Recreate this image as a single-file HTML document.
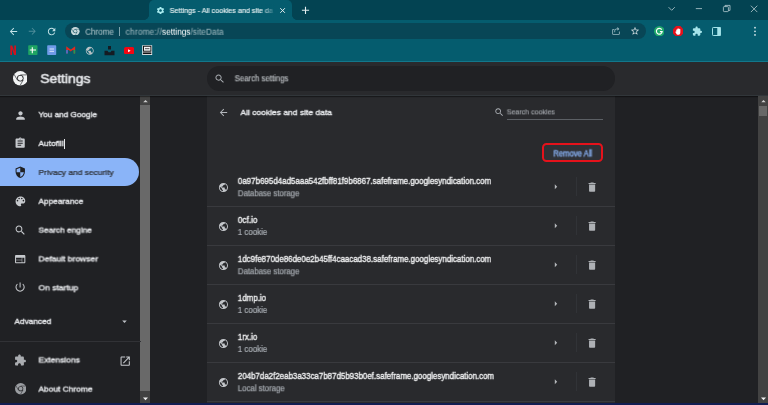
<!DOCTYPE html>
<html><head><meta charset="utf-8"><title>Settings - All cookies and site data</title>
<style>
*{box-sizing:border-box;margin:0;padding:0}
html,body{width:768px;height:405px;overflow:hidden;background:#202124;font-family:"Liberation Sans",sans-serif;}
body{position:relative}
.abs{position:absolute}
.t{position:absolute;left:0;top:0;white-space:pre;line-height:1;transform-origin:0 0;will-change:opacity}
#tabstrip{left:0;top:0;width:768px;height:20px;background:#034352}
#tab{left:148.5px;top:0;width:143.5px;height:21px;background:#055c6e;border-radius:5px 5px 0 0}
#tabl{left:143.5px;top:15px;width:5px;height:5px;background:radial-gradient(circle at 0 0,#034352 4.6px,#055c6e 5.2px)}
#tabr{left:292px;top:15px;width:5px;height:5px;background:radial-gradient(circle at 100% 0,#034352 4.6px,#055c6e 5.2px)}
#toolbar{left:0;top:20px;width:768px;height:41px;background:#055c6e}
#omni{left:65px;top:23px;width:581px;height:16.4px;border-radius:8.2px;background:#084656}
#sep{left:0;top:61px;width:768px;height:1px;background:#12778b}
#hdr{left:0;top:62px;width:768px;height:34px;background:#292a2d;box-shadow:0 1px 1px rgba(0,0,0,.4);border-bottom:1px solid #31363a}
#search{left:207px;top:66.2px;width:408px;height:24.4px;border-radius:12.2px;background:#202124}
#side{left:0;top:95.8px;width:141px;height:310px;background:#202124}
#sel{left:0;top:157.8px;width:138.8px;height:28.6px;background:#8ab4f8;border-radius:0 14.5px 14.5px 0}
#sbar{left:140.3px;top:95.8px;width:9.4px;height:307.2px;background:#424242}
#thumb{left:140.3px;top:105.1px;width:9.400px;height:286.1px;background:#696969}
#card{left:207px;top:95.8px;width:408px;height:308px;background:#292a2d}
.row{position:absolute;left:207px;width:408px;height:1px;background:#393a3e}
.vsep{position:absolute;left:576px;width:1px;height:19px;background:#313337}
#sideline{left:0;top:340.9px;width:140.7px;height:1px;background:#313236}
#under{left:506.9px;top:119.2px;width:96px;height:1px;background:#5c6065}
#rabox{left:542.2px;top:143.4px;width:61.2px;height:18.7px;border:2px solid #e5121b;border-radius:4.5px;background:#2f3136}
#caret{left:64.2px;top:138.6px;width:0.9px;height:10px;background:#e8eaed}
#bottom{left:0;top:403.1px;width:768px;height:2px;background:#121e52}
#fade{left:261px;top:4px;width:16px;height:13px;background:linear-gradient(90deg,rgba(5,92,110,0),rgba(5,92,110,.25) 30%,#055c6e 90%)}
</style></head><body>
<div class="abs" id="tabstrip"></div>
<div class="abs" id="tab"></div><div class="abs" id="tabl"></div><div class="abs" id="tabr"></div>
<div class="abs" id="toolbar"></div>
<div class="abs" id="omni"></div>
<div class="abs" id="sep"></div>
<div class="abs" id="side"></div>
<div class="abs" id="sel"></div>
<div class="abs" id="sbar"></div>
<div class="abs" id="thumb"></div>
<div class="abs" id="card"></div>
<div class="abs" id="hdr"></div>
<div class="abs" id="search"></div>
<div class="abs" id="sideline"></div>
<div class="abs" id="under"></div>
<div class="abs" id="rabox"></div>
<div class="abs" id="caret"></div>
<div class="abs" style="left:119.2px;top:26.5px;width:0.8px;height:9.5px;background:#7fa5ae"></div>
<!-- window controls -->
<svg class="abs" style="left:660px;top:0" width="108" height="20" viewBox="0 0 108 20" fill="none" stroke="#b9cdd2" stroke-width="0.8">
<path d="M8.6 7.2L11.7 10.3L14.8 7.2"/>
<path d="M35.8 8.6H42"/>
<rect x="63.4" y="6.6" width="5" height="5" rx="0.8"/><path d="M65 6.6V5.4H70V10.4H68.4"/>
<path d="M90.9 5.7L97.3 12.1M97.3 5.7L90.9 12.1"/>
</svg>
<!-- tab close + new tab -->
<svg class="abs" style="left:276px;top:4px" width="40" height="14" viewBox="0 0 40 14" fill="none" stroke="#e4eef0" stroke-width="1">
<path d="M4.3 4.2L8.9 8.8M8.9 4.2L4.3 8.8"/>
<path d="M25.9 6.3H33.1M29.5 2.8V9.9" stroke-width="1.1"/>
</svg>
<!-- right scrollbar -->
<div class="abs" style="left:758px;top:95.8px;width:10px;height:307.3px;background:#424242"></div>
<div class="abs" style="left:759px;top:105.5px;width:7.900px;height:10.200px;background:#686868"></div>
<svg class="abs" style="left:758.500px;top:96px" width="9" height="10" viewBox="0 0 9 10"><path d="M2.300 6.200L4.500 3.900L6.700 6.200z" fill="#d0d0d0"/></svg>
<svg class="abs" style="left:758.600px;top:392.700px" width="9" height="11" viewBox="0 0 9 11"><path d="M2 4.500L4.500 7.300L7 4.500z" fill="#f1f1f1"/></svg>
<!-- scrollbar arrows -->
<svg class="abs" style="left:140.5px;top:95.8px" width="9" height="10" viewBox="0 0 9 10"><path d="M2.200 6.300L4.500 3.900L6.800 6.300z" fill="#d0d0d0"/></svg>
<svg class="abs" style="left:140.500px;top:392.9px" width="9" height="11" viewBox="0 0 9 11"><path d="M2 4.500L4.500 7.300L7 4.500z" fill="#f1f1f1"/></svg>
<!-- extension icons -->
<svg class="abs" style="left:653.6px;top:25.9px" width="10.6" height="10.6" viewBox="0 0 24 24"><circle cx="12" cy="12" r="12" fill="#1fa86b"/><path d="M17.500 8.200A6.600 6.600 0 1 0 18.600 12.600H13.400" fill="none" stroke="#fff" stroke-width="2.600"/></svg>
<svg class="abs" style="left:672.8px;top:25.900px" width="10.4" height="10.600" viewBox="0 0 24 24"><path d="M7 0H17L24 7V17L17 24H7L0 17V7z" fill="#e3121c"/><path d="M7.500 13V8.500a1.300 1.300 0 0 1 2.300 0V6.500a1.300 1.300 0 0 1 2.400 0V6a1.300 1.300 0 0 1 2.400 0V7.500a1.200 1.200 0 0 1 2.300 0V14c0 4-2 6-5 6s-4-2-6.500-6.500c1-1 1.600-.8 2.100-.5z" fill="#fff"/></svg>
<svg class="abs" style="left:711.8px;top:26.8px" width="9.200" height="9" viewBox="0 0 18.400 18" ><rect x="1" y="1" width="16.400" height="16" rx="1.500" fill="none" stroke="#a5e4ea" stroke-width="2"/><rect x="10.500" y="1" width="7" height="16" fill="#a5e4ea"/></svg>
<svg class="abs" style="left:753px;top:26px" width="4" height="11" viewBox="0 0 4 11" fill="#d6e6ea"><circle cx="2" cy="1.700" r="0.900"/><circle cx="2" cy="5.300" r="0.900"/><circle cx="2" cy="8.900" r="0.900"/></svg>
<!-- bookmarks -->
<svg class="abs" style="left:8px;top:44px" width="150" height="13" viewBox="0 0 150 13">
<path d="M2.300 1.500H4.200L6.300 7.500V1.500H8V11H6.200L4 5V11H2.300z" fill="#d3121d"/>
<rect x="20.200" y="1.300" width="9.300" height="9.700" rx="0.800" fill="#1fa463"/><path d="M24.300 3.300V9.300M21.800 6H28M25 6" stroke="#fff" stroke-width="1.100" fill="none"/>
<rect x="39.200" y="1.300" width="9" height="9.700" rx="0.800" fill="#6f9be8"/><path d="M41.500 5H46M41.500 7.300H46" stroke="#e9f0fc" stroke-width="0.900"/>
<path d="M59 9.500V3.800L62.700 6.600L66.400 3.800V9.500" fill="none" stroke="#e02a20" stroke-width="1.500"/><path d="M59 9.500V6" stroke="#3b78e7" stroke-width="1.500"/><path d="M66.400 9.500V6" stroke="#1e9e52" stroke-width="1.500"/>
</svg>
<svg class="abs" style="left:7.50px;top:25.60px;" width="11" height="11" viewBox="0 0 24 24"><path fill="#c5e3e8" d="M20 11H7.83l5.59-5.59L12 4l-8 8 8 8 1.41-1.41L7.83 13H20v-2z"/></svg>
<svg class="abs" style="left:26.75px;top:25.95px;" width="10.5" height="10.5" viewBox="0 0 24 24"><path fill="#4f8d9a" d="M12 4l-1.41 1.41L16.17 11H4v2h12.17l-5.58 5.59L12 20l8-8z"/></svg>
<svg class="abs" style="left:45.70px;top:25.60px;" width="11.2" height="11.2" viewBox="0 0 24 24"><path fill="#c5e3e8" d="M17.65 6.35C16.2 4.9 14.21 4 12 4c-4.42 0-7.99 3.58-7.99 8s3.57 8 7.99 8c3.73 0 6.84-2.55 7.73-6h-2.08c-.82 2.33-3.04 4-5.65 4-3.31 0-6-2.69-6-6s2.69-6 6-6c1.66 0 3.14.69 4.22 1.78L13 11h7V4l-2.35 2.35z"/></svg>
<svg class="abs" style="left:71.20px;top:26.90px" width="8.6" height="8.6" viewBox="-12 -12 24 24"><circle r="12" fill="#c9d9dc"/><circle r="5.4" fill="#084a5a"/><circle r="4.0" fill="#c9d9dc"/><path d="M0 -5.6H10.6 M4.85 2.8L-0.45 11.98 M-4.85 2.8L-10.15 -6.38" stroke="#084a5a" stroke-width="1.1" fill="none"/></svg>
<svg class="abs" style="left:155.80px;top:6.10px;" width="9" height="9" viewBox="0 0 24 24"><path fill="#a9ecf0" d="M19.14 12.94c.04-.3.06-.61.06-.94 0-.32-.02-.64-.07-.94l2.030-1.580c.18-.14.23-.41.12-.61l-1.920-3.320c-.12-.22-.37-.29-.59-.22l-2.390.96c-.5-.38-1.030-.7-1.620-.94l-.36-2.540c-.04-.24-.24-.41-.48-.41h-3.840c-.24 0-.43.17-.47.41l-.36 2.540c-.59.24-1.130.57-1.620.94l-2.390-.96c-.22-.08-.47 0-.59.22L2.740 8.870c-.12.21-.08.47.12.61l2.030 1.580c-.05.3-.09.63-.09.94s.02.64.07.94l-2.030 1.580c-.18.14-.23.41-.12.61l1.920 3.320c.12.22.37.29.59.22l2.390-.96c.5.38 1.030.7 1.620.94l.36 2.540c.05.24.24.41.48.41h3.840c.24 0 .44-.17.470-.41l.36-2.540c.59-.24 1.130-.56 1.620-.94l2.390.96c.22.08.47 0 .59-.22l1.920-3.320c.12-.22.070-.47-.12-.61l-2.010-1.580zM12 15.600c-1.980 0-3.600-1.620-3.600-3.600s1.620-3.600 3.600-3.600 3.600 1.620 3.600 3.600-1.620 3.600-3.600 3.600z"/></svg>
<svg class="abs" style="left:610.70px;top:26.30px;" width="10" height="10" viewBox="0 0 24 24"><path fill="#9dbcc3" d="M19 19H5V9h3V7H5c-1.100 0-2 .9-2 2v10c0 1.100.9 2 2 2h14c1.100 0 2-.9 2-2v-6h-2v6zM16 3l-1.410 1.410L16.170 6H14c-3.310 0-6 2.690-6 6v3h2v-3c0-2.210 1.790-4 4-4h2.170l-1.580 1.590L16 11l4-4-4-4z"/></svg>
<svg class="abs" style="left:630.00px;top:26.00px;" width="10" height="10" viewBox="0 0 24 24"><path fill="#d5dfe2" d="M22 9.240l-7.190-.62L12 2 9.190 8.630 2 9.240l5.460 4.730L5.820 21 12 17.270 18.180 21l-1.630-7.030L22 9.240zM12 15.400l-3.760 2.270 1-4.280-3.320-2.880 4.380-.38L12 6.100l1.710 4.040 4.380.38-3.320 2.880 1 4.280L12 15.400z"/></svg>
<svg class="abs" style="left:691.95px;top:26.05px;" width="10.5" height="10.5" viewBox="0 0 24 24"><path fill="#a5e4ea" d="M20.5 11H19V7c0-1.1-.9-2-2-2h-4V3.500C13 2.120 11.880 1 10.500 1S8 2.120 8 3.500V5H4c-1.100 0-1.990.9-1.990 2v3.800H3.500c1.490 0 2.700 1.210 2.700 2.700s-1.210 2.700-2.700 2.700H2V20c0 1.100.9 2 2 2h3.800v-1.500c0-1.490 1.210-2.700 2.700-2.700 1.490 0 2.700 1.210 2.700 2.700V22H17c1.100 0 2-.9 2-2v-4h1.500c1.380 0 2.500-1.120 2.500-2.500S21.880 11 20.500 11z"/></svg>
<svg class="abs" style="left:12.70px;top:71.30px" width="14.6" height="14.6" viewBox="-12 -12 24 24"><circle r="12" fill="#f1f3f4"/><circle r="5.4" fill="#292a2d"/><circle r="4.0" fill="#f1f3f4"/><path d="M0 -5.6H10.6 M4.85 2.8L-0.45 11.98 M-4.85 2.8L-10.15 -6.38" stroke="#292a2d" stroke-width="1.1" fill="none"/></svg>
<svg class="abs" style="left:214.05px;top:72.75px;" width="11.5" height="11.5" viewBox="0 0 24 24"><path fill="#a6aaaf" d="M15.5 14h-.79l-.28-.27C15.41 12.59 16 11.11 16 9.5 16 5.91 13.09 3 9.5 3S3 5.91 3 9.5 5.91 16 9.5 16c1.61 0 3.09-.59 4.23-1.570l.27.28v.79l5 4.990L20.490 19l-4.990-5zm-6 0C7.010 14 5 11.990 5 9.500S7.010 5 9.500 5 14 7.010 14 9.500 11.990 14 9.500 14z"/></svg>
<svg class="abs" style="left:13.80px;top:108.50px;" width="13" height="13" viewBox="0 0 24 24"><path fill="#c6c9cd" d="M12 12c2.21 0 4-1.79 4-4s-1.79-4-4-4-4 1.79-4 4 1.79 4 4 4zm0 2c-2.67 0-8 1.34-8 4v2h16v-2c0-2.66-5.33-4-8-4z"/></svg>
<svg class="abs" style="left:14.45px;top:137.05px;" width="12.3" height="12.3" viewBox="0 0 24 24"><path fill="#c6c9cd" d="M19 3h-4.18C14.4 1.84 13.3 1 12 1c-1.3 0-2.4.84-2.82 2H5c-1.1 0-2 .9-2 2v14c0 1.1.9 2 2 2h14c1.1 0 2-.9 2-2V5c0-1.1-.9-2-2-2zm-7 0c.55 0 1 .45 1 1s-.45 1-1 1-1-.45-1-1 .45-1 1-1zm2 14H7v-2h7v2zm3-4H7v-2h10v2zm0-4H7V7h10v2z"/></svg>
<svg class="abs" style="left:14.35px;top:166.05px;" width="12.5" height="12.5" viewBox="0 0 24 24"><path fill="#202124" d="M12 1L3 5v6c0 5.55 3.84 10.74 9 12 5.16-1.26 9-6.45 9-12V5l-9-4zm0 10.99h7c-.53 4.12-3.28 7.79-7 8.94V12H5V6.3l7-3.11v8.8z"/></svg>
<svg class="abs" style="left:14.00px;top:194.55px;" width="12.9" height="12.9" viewBox="0 0 24 24"><path fill="#c6c9cd" d="M12 3c-4.97 0-9 4.03-9 9s4.03 9 9 9c.83 0 1.5-.67 1.5-1.5 0-.39-.15-.74-.39-1.01-.23-.26-.38-.61-.38-.99 0-.83.67-1.5 1.5-1.5H16c2.76 0 5-2.24 5-5 0-4.42-4.03-8-9-8zm-5.5 9c-.83 0-1.5-.67-1.5-1.5S5.67 9 6.5 9 8 9.67 8 10.5 7.33 12 6.5 12zm3-4C8.67 8 8 7.33 8 6.5S8.67 5 9.5 5s1.5.67 1.5 1.500S10.33 8 9.5 8zm5 0c-.83 0-1.5-.67-1.5-1.500S13.670 5 14.5 5s1.5.67 1.5 1.500S15.33 8 14.5 8zm3 4c-.83 0-1.5-.67-1.5-1.500S16.670 9 17.5 9s1.5.67 1.5 1.500-.67 1.500-1.500 1.500z"/></svg>
<svg class="abs" style="left:14.40px;top:223.80px;" width="12.6" height="12.6" viewBox="0 0 24 24"><path fill="#c6c9cd" d="M15.5 14h-.79l-.28-.27C15.41 12.59 16 11.11 16 9.5 16 5.91 13.09 3 9.5 3S3 5.91 3 9.5 5.91 16 9.5 16c1.61 0 3.09-.59 4.23-1.570l.27.28v.79l5 4.990L20.490 19l-4.990-5zm-6 0C7.010 14 5 11.990 5 9.500S7.010 5 9.500 5 14 7.010 14 9.500 11.990 14 9.500 14z"/></svg>
<svg class="abs" style="left:14.20px;top:252.85px;" width="12.4" height="12.4" viewBox="0 0 24 24"><path fill="#c6c9cd" d="M20 4H4c-1.1 0-1.99.9-1.99 2L2 18c0 1.1.9 2 2 2h16c1.1 0 2-.9 2-2V6c0-1.1-.9-2-2-2zm-5 14H4v-4h11v4zm0-5H4V9h11v4zm5 5h-4V9h4v9z"/></svg>
<svg class="abs" style="left:14.35px;top:281.35px;" width="12.2" height="12.2" viewBox="0 0 24 24"><path fill="#c6c9cd" d="M13 3h-2v10h2V3zm4.83 2.170l-1.420 1.420C17.990 7.860 19 9.810 19 12c0 3.870-3.130 7-7 7s-7-3.130-7-7c0-2.190 1.010-4.140 2.580-5.420L6.170 5.170C4.230 6.820 3 9.260 3 12c0 4.970 4.030 9 9 9s9-4.030 9-9c0-2.740-1.230-5.180-3.170-6.830z"/></svg>
<svg class="abs" style="left:119.00px;top:315.80px;" width="11" height="11" viewBox="0 0 24 24"><path fill="#bdc1c6" d="M7 10l5 5 5-5z"/></svg>
<svg class="abs" style="left:14.25px;top:354.15px;" width="12.5" height="12.5" viewBox="0 0 24 24"><path fill="#aaadb1" d="M20.5 11H19V7c0-1.1-.9-2-2-2h-4V3.500C13 2.120 11.880 1 10.500 1S8 2.120 8 3.500V5H4c-1.100 0-1.990.9-1.990 2v3.800H3.500c1.490 0 2.700 1.210 2.700 2.700s-1.210 2.700-2.700 2.700H2V20c0 1.100.9 2 2 2h3.800v-1.500c0-1.490 1.210-2.700 2.700-2.700 1.490 0 2.700 1.210 2.700 2.700V22H17c1.100 0 2-.9 2-2v-4h1.500c1.380 0 2.500-1.120 2.500-2.500S21.880 11 20.500 11z"/></svg>
<svg class="abs" style="left:118.50px;top:354.50px;" width="12.4" height="12.4" viewBox="0 0 24 24"><path fill="#c6c9cd" d="M19 19H5V5h7V3H5c-1.110 0-2 .9-2 2v14c0 1.100.89 2 2 2h14c1.100 0 2-.9 2-2v-7h-2v7zM14 3v2h3.590l-9.830 9.830 1.410 1.410L19 6.410V10h2V3h-7z"/></svg>
<svg class="abs" style="left:15.00px;top:383.30px" width="11.4" height="11.4" viewBox="-12 -12 24 24"><circle r="12" fill="#9b9ea2"/><circle r="5.4" fill="#202124"/><circle r="4.0" fill="#9b9ea2"/><path d="M0 -5.6H10.6 M4.85 2.8L-0.45 11.98 M-4.85 2.8L-10.15 -6.38" stroke="#202124" stroke-width="1.1" fill="none"/></svg>
<svg class="abs" style="left:218.10px;top:107.20px;" width="11" height="11" viewBox="0 0 24 24"><path fill="#b4b7bc" d="M20 11H7.83l5.59-5.59L12 4l-8 8 8 8 1.41-1.41L7.83 13H20v-2z"/></svg>
<svg class="abs" style="left:494.35px;top:107.25px;" width="10.5" height="10.5" viewBox="0 0 24 24"><path fill="#aeb2b7" d="M15.5 14h-.79l-.28-.27C15.41 12.59 16 11.11 16 9.5 16 5.91 13.09 3 9.5 3S3 5.91 3 9.5 5.91 16 9.5 16c1.61 0 3.09-.59 4.23-1.570l.27.28v.79l5 4.990L20.490 19l-4.990-5zm-6 0C7.010 14 5 11.990 5 9.500S7.010 5 9.500 5 14 7.010 14 9.500 11.990 14 9.500 14z"/></svg>
<svg class="abs" style="left:218.10px;top:181.55px;" width="10.9" height="10.9" viewBox="0 0 24 24"><path fill="#c3c6ca" d="M12 2C6.48 2 2 6.48 2 12s4.48 10 10 10 10-4.48 10-10S17.520 2 12 2zm-1 17.930c-3.950-.49-7-3.850-7-7.930 0-.62.080-1.210.210-1.790L9 15v1c0 1.100.9 2 2 2v1.930zm6.900-2.540c-.26-.81-1-1.390-1.900-1.390h-1v-3c0-.55-.45-1-1-1H8v-2h2c.55 0 1-.45 1-1V7h2c1.100 0 2-.9 2-2v-.41c2.930 1.190 5 4.060 5 7.410 0 2.080-.8 3.970-2.100 5.390z"/></svg>
<svg class="abs" style="left:549.65px;top:181.05px;" width="11.5" height="11.5" viewBox="0 0 24 24"><path fill="#b5b8bc" d="M10 17l5-5-5-5v10z"/></svg>
<svg class="abs" style="left:586.00px;top:180.60px;" width="12.2" height="12.2" viewBox="0 0 24 24"><path fill="#aeb1b5" d="M6 19c0 1.100.9 2 2 2h8c1.100 0 2-.9 2-2V7H6v12zM19 4h-3.500l-1-1h-5l-1 1H5v2h14V4z"/></svg>
<div class="vsep" style="top:177.3px"></div>
<div class="row" style="top:205.9px"></div>
<svg class="abs" style="left:218.10px;top:220.55px;" width="10.9" height="10.9" viewBox="0 0 24 24"><path fill="#c3c6ca" d="M12 2C6.48 2 2 6.48 2 12s4.48 10 10 10 10-4.48 10-10S17.520 2 12 2zm-1 17.930c-3.950-.49-7-3.850-7-7.930 0-.62.080-1.210.210-1.790L9 15v1c0 1.100.9 2 2 2v1.930zm6.900-2.540c-.26-.81-1-1.390-1.900-1.390h-1v-3c0-.55-.45-1-1-1H8v-2h2c.55 0 1-.45 1-1V7h2c1.100 0 2-.9 2-2v-.41c2.930 1.190 5 4.060 5 7.410 0 2.080-.8 3.970-2.100 5.390z"/></svg>
<svg class="abs" style="left:549.65px;top:220.05px;" width="11.5" height="11.5" viewBox="0 0 24 24"><path fill="#b5b8bc" d="M10 17l5-5-5-5v10z"/></svg>
<svg class="abs" style="left:586.00px;top:219.60px;" width="12.2" height="12.2" viewBox="0 0 24 24"><path fill="#aeb1b5" d="M6 19c0 1.100.9 2 2 2h8c1.100 0 2-.9 2-2V7H6v12zM19 4h-3.500l-1-1h-5l-1 1H5v2h14V4z"/></svg>
<div class="vsep" style="top:216.3px"></div>
<div class="row" style="top:244.9px"></div>
<svg class="abs" style="left:218.10px;top:259.55px;" width="10.9" height="10.9" viewBox="0 0 24 24"><path fill="#c3c6ca" d="M12 2C6.48 2 2 6.48 2 12s4.48 10 10 10 10-4.48 10-10S17.520 2 12 2zm-1 17.930c-3.950-.49-7-3.850-7-7.930 0-.62.080-1.210.210-1.790L9 15v1c0 1.100.9 2 2 2v1.930zm6.900-2.540c-.26-.81-1-1.390-1.900-1.390h-1v-3c0-.55-.45-1-1-1H8v-2h2c.55 0 1-.45 1-1V7h2c1.100 0 2-.9 2-2v-.41c2.930 1.190 5 4.060 5 7.410 0 2.080-.8 3.970-2.100 5.390z"/></svg>
<svg class="abs" style="left:549.65px;top:259.05px;" width="11.5" height="11.5" viewBox="0 0 24 24"><path fill="#b5b8bc" d="M10 17l5-5-5-5v10z"/></svg>
<svg class="abs" style="left:586.00px;top:258.60px;" width="12.2" height="12.2" viewBox="0 0 24 24"><path fill="#aeb1b5" d="M6 19c0 1.100.9 2 2 2h8c1.100 0 2-.9 2-2V7H6v12zM19 4h-3.500l-1-1h-5l-1 1H5v2h14V4z"/></svg>
<div class="vsep" style="top:255.3px"></div>
<div class="row" style="top:283.9px"></div>
<svg class="abs" style="left:218.10px;top:298.55px;" width="10.9" height="10.9" viewBox="0 0 24 24"><path fill="#c3c6ca" d="M12 2C6.48 2 2 6.48 2 12s4.48 10 10 10 10-4.48 10-10S17.520 2 12 2zm-1 17.930c-3.950-.49-7-3.850-7-7.930 0-.62.080-1.210.210-1.790L9 15v1c0 1.100.9 2 2 2v1.930zm6.900-2.540c-.26-.81-1-1.390-1.900-1.390h-1v-3c0-.55-.45-1-1-1H8v-2h2c.55 0 1-.45 1-1V7h2c1.100 0 2-.9 2-2v-.41c2.930 1.190 5 4.060 5 7.410 0 2.080-.8 3.970-2.100 5.390z"/></svg>
<svg class="abs" style="left:549.65px;top:298.05px;" width="11.5" height="11.5" viewBox="0 0 24 24"><path fill="#b5b8bc" d="M10 17l5-5-5-5v10z"/></svg>
<svg class="abs" style="left:586.00px;top:297.60px;" width="12.2" height="12.2" viewBox="0 0 24 24"><path fill="#aeb1b5" d="M6 19c0 1.100.9 2 2 2h8c1.100 0 2-.9 2-2V7H6v12zM19 4h-3.500l-1-1h-5l-1 1H5v2h14V4z"/></svg>
<div class="vsep" style="top:294.3px"></div>
<div class="row" style="top:322.9px"></div>
<svg class="abs" style="left:218.10px;top:337.55px;" width="10.9" height="10.9" viewBox="0 0 24 24"><path fill="#c3c6ca" d="M12 2C6.48 2 2 6.48 2 12s4.48 10 10 10 10-4.48 10-10S17.520 2 12 2zm-1 17.930c-3.950-.49-7-3.850-7-7.930 0-.62.080-1.210.210-1.790L9 15v1c0 1.100.9 2 2 2v1.930zm6.900-2.540c-.26-.81-1-1.390-1.900-1.390h-1v-3c0-.55-.45-1-1-1H8v-2h2c.55 0 1-.45 1-1V7h2c1.100 0 2-.9 2-2v-.41c2.930 1.190 5 4.060 5 7.410 0 2.080-.8 3.970-2.100 5.390z"/></svg>
<svg class="abs" style="left:549.65px;top:337.05px;" width="11.5" height="11.5" viewBox="0 0 24 24"><path fill="#b5b8bc" d="M10 17l5-5-5-5v10z"/></svg>
<svg class="abs" style="left:586.00px;top:336.60px;" width="12.2" height="12.2" viewBox="0 0 24 24"><path fill="#aeb1b5" d="M6 19c0 1.100.9 2 2 2h8c1.100 0 2-.9 2-2V7H6v12zM19 4h-3.500l-1-1h-5l-1 1H5v2h14V4z"/></svg>
<div class="vsep" style="top:333.3px"></div>
<div class="row" style="top:361.9px"></div>
<svg class="abs" style="left:218.10px;top:376.55px;" width="10.9" height="10.9" viewBox="0 0 24 24"><path fill="#c3c6ca" d="M12 2C6.48 2 2 6.48 2 12s4.48 10 10 10 10-4.48 10-10S17.520 2 12 2zm-1 17.930c-3.950-.49-7-3.850-7-7.930 0-.62.080-1.210.210-1.790L9 15v1c0 1.100.9 2 2 2v1.930zm6.900-2.540c-.26-.81-1-1.390-1.900-1.390h-1v-3c0-.55-.45-1-1-1H8v-2h2c.55 0 1-.45 1-1V7h2c1.100 0 2-.9 2-2v-.41c2.930 1.190 5 4.060 5 7.410 0 2.080-.8 3.970-2.100 5.390z"/></svg>
<svg class="abs" style="left:549.65px;top:376.05px;" width="11.5" height="11.5" viewBox="0 0 24 24"><path fill="#b5b8bc" d="M10 17l5-5-5-5v10z"/></svg>
<svg class="abs" style="left:586.00px;top:375.60px;" width="12.2" height="12.2" viewBox="0 0 24 24"><path fill="#aeb1b5" d="M6 19c0 1.100.9 2 2 2h8c1.100 0 2-.9 2-2V7H6v12zM19 4h-3.500l-1-1h-5l-1 1H5v2h14V4z"/></svg>
<div class="vsep" style="top:372.3px"></div>
<div class="row" style="top:400.9px"></div>
<svg class="abs" style="left:85.05px;top:45.55px;" width="9.5" height="9.5" viewBox="0 0 24 24"><path fill="#b9c3c6" d="M12 2C6.48 2 2 6.48 2 12s4.48 10 10 10 10-4.48 10-10S17.520 2 12 2zm-1 17.930c-3.950-.49-7-3.850-7-7.930 0-.62.080-1.210.210-1.790L9 15v1c0 1.100.9 2 2 2v1.930zm6.900-2.540c-.26-.81-1-1.390-1.900-1.390h-1v-3c0-.55-.45-1-1-1H8v-2h2c.55 0 1-.45 1-1V7h2c1.100 0 2-.9 2-2v-.41c2.930 1.190 5 4.060 5 7.410 0 2.080-.8 3.970-2.100 5.390z"/></svg>
<svg class="abs" style="left:103.500px;top:45px" width="11" height="11" viewBox="0 0 11 11"><path d="M0.500 5.800H3.500L4.500 7.300H6.500L7.500 5.800H10.500V10.300H0.500z" fill="#151b22"/><rect x="4" y="1" width="3" height="3.500" fill="#151b22"/></svg>
<svg class="abs" style="left:123.500px;top:46.800px" width="10.200" height="7.400" viewBox="0 0 20 14.500"><rect width="20" height="14.500" rx="4" fill="#f40612"/><path d="M8 4.200L13 7.250L8 10.300z" fill="#fff"/></svg>
<svg class="abs" style="left:142.400px;top:45px" width="10.400" height="10.400" viewBox="0 0 21 21"><rect x="0.500" y="0.500" width="20" height="20" fill="#f4f6f7"/><rect x="3" y="2.500" width="15" height="10" fill="none" stroke="#141414" stroke-width="2"/><path d="M6 7.500H15" stroke="#141414" stroke-width="1.500"/><rect x="2" y="15" width="17" height="3.500" fill="#141414"/></svg>
<div class="t" style="font-size:28.69px;color:#e6f0f2;transform:translate(169.70px,6.54px) scale(0.2500,0.2718) rotate(.02deg);-webkit-text-stroke:0.60px #e6f0f2;">Settings - All cookies and site da</div>
<div class="t" style="font-size:33.20px;color:#b4c8cd;transform:translate(85.25px,27.28px) scale(0.2500,0.2600) rotate(.02deg);letter-spacing:-0.51px;">Chrome</div>
<div class="t" style="font-size:33.20px;color:#a5bdc3;transform:translate(125.60px,27.28px) scale(0.2500,0.2600) rotate(.02deg);letter-spacing:0.80px;">chrome://</div>
<div class="t" style="font-size:33.20px;color:#ffffff;transform:translate(162.00px,27.28px) scale(0.2500,0.2600) rotate(.02deg);letter-spacing:-0.05px;">settings</div>
<div class="t" style="font-size:33.20px;color:#a5bdc3;transform:translate(190.50px,27.28px) scale(0.2500,0.2600) rotate(.02deg);letter-spacing:0.22px;">/siteData</div>
<div class="t" style="font-size:55.57px;color:#e8eaed;transform:translate(40.30px,72.05px) scale(0.2500,0.2375) rotate(.02deg);-webkit-text-stroke:2.20px #e8eaed;">Settings</div>
<div class="t" style="font-size:31.11px;color:#c4c8cc;transform:translate(234.70px,74.85px) scale(0.2500,0.2668) rotate(.02deg);-webkit-text-stroke:0.40px #c4c8cc;">Search settings</div>
<div class="t" style="font-size:32.85px;color:#e8eaed;transform:translate(38.50px,110.89px) scale(0.2500,0.2466) rotate(.02deg);-webkit-text-stroke:1.40px #e8eaed;">You and Google</div>
<div class="t" style="font-size:33.72px;color:#e8eaed;transform:translate(38.50px,139.69px) scale(0.2500,0.2402) rotate(.02deg);-webkit-text-stroke:1.40px #e8eaed;">Autofill</div>
<div class="t" style="font-size:33.62px;color:#2b2e33;transform:translate(38.50px,168.49px) scale(0.2500,0.2409) rotate(.02deg);-webkit-text-stroke:1.00px #2b2e33;">Privacy and security</div>
<div class="t" style="font-size:33.23px;color:#e8eaed;transform:translate(38.50px,197.29px) scale(0.2500,0.2438) rotate(.02deg);-webkit-text-stroke:1.40px #e8eaed;">Appearance</div>
<div class="t" style="font-size:33.18px;color:#e8eaed;transform:translate(38.50px,226.09px) scale(0.2500,0.2441) rotate(.02deg);-webkit-text-stroke:1.40px #e8eaed;">Search engine</div>
<div class="t" style="font-size:34.04px;color:#e8eaed;transform:translate(38.50px,254.89px) scale(0.2500,0.2379) rotate(.02deg);-webkit-text-stroke:1.40px #e8eaed;">Default browser</div>
<div class="t" style="font-size:34.10px;color:#e8eaed;transform:translate(38.50px,283.79px) scale(0.2500,0.2376) rotate(.02deg);-webkit-text-stroke:1.40px #e8eaed;">On startup</div>
<div class="t" style="font-size:33.18px;color:#e8eaed;transform:translate(14.50px,317.39px) scale(0.2500,0.2441) rotate(.02deg);-webkit-text-stroke:1.40px #e8eaed;">Advanced</div>
<div class="t" style="font-size:33.85px;color:#e8eaed;transform:translate(38.50px,356.19px) scale(0.2500,0.2393) rotate(.02deg);-webkit-text-stroke:1.40px #e8eaed;">Extensions</div>
<div class="t" style="font-size:33.62px;color:#e8eaed;transform:translate(38.50px,385.09px) scale(0.2500,0.2409) rotate(.02deg);-webkit-text-stroke:1.40px #e8eaed;">About Chrome</div>
<div class="t" style="font-size:33.94px;color:#e8eaed;transform:translate(240.50px,108.74px) scale(0.2500,0.2328) rotate(.02deg);-webkit-text-stroke:1.40px #e8eaed;">All cookies and site data</div>
<div class="t" style="font-size:28.14px;color:#a8acb1;transform:translate(506.80px,107.94px) scale(0.2500,0.2878) rotate(.02deg);-webkit-text-stroke:0.40px #a8acb1;">Search cookies</div>
<div class="t" style="font-size:30.69px;color:#8ab4f8;transform:translate(553.40px,149.25px) scale(0.2500,0.2705) rotate(.02deg);-webkit-text-stroke:1.00px #8ab4f8;">Remove All</div>
<div class="t" style="font-size:31.83px;color:#f4f5f6;transform:translate(237.80px,176.75px) scale(0.2500,0.2702) rotate(.02deg);-webkit-text-stroke:1.20px #f4f5f6;">0a97b695d4ad5aaa542fbff81f9b6867.safeframe.googlesyndication.com</div>
<div class="t" style="font-size:31.16px;color:#a6abb1;transform:translate(237.80px,188.80px) scale(0.2500,0.2696) rotate(.02deg);-webkit-text-stroke:0.80px #a6abb1;">Database storage</div>
<div class="t" style="font-size:32.97px;color:#f4f5f6;transform:translate(237.80px,215.75px) scale(0.2500,0.2609) rotate(.02deg);-webkit-text-stroke:1.20px #f4f5f6;">0cf.io</div>
<div class="t" style="font-size:31.57px;color:#a6abb1;transform:translate(237.80px,227.80px) scale(0.2500,0.2660) rotate(.02deg);-webkit-text-stroke:0.80px #a6abb1;">1 cookie</div>
<div class="t" style="font-size:31.74px;color:#f4f5f6;transform:translate(237.80px,254.75px) scale(0.2500,0.2710) rotate(.02deg);-webkit-text-stroke:1.20px #f4f5f6;">1dc9fe870de86de0e2b45ff4caacad38.safeframe.googlesyndication.com</div>
<div class="t" style="font-size:31.16px;color:#a6abb1;transform:translate(237.80px,266.80px) scale(0.2500,0.2696) rotate(.02deg);-webkit-text-stroke:0.80px #a6abb1;">Database storage</div>
<div class="t" style="font-size:31.80px;color:#f4f5f6;transform:translate(237.80px,293.75px) scale(0.2500,0.2704) rotate(.02deg);-webkit-text-stroke:1.20px #f4f5f6;">1dmp.io</div>
<div class="t" style="font-size:31.57px;color:#a6abb1;transform:translate(237.80px,305.80px) scale(0.2500,0.2660) rotate(.02deg);-webkit-text-stroke:0.80px #a6abb1;">1 cookie</div>
<div class="t" style="font-size:31.80px;color:#f4f5f6;transform:translate(237.80px,332.75px) scale(0.2500,0.2704) rotate(.02deg);-webkit-text-stroke:1.20px #f4f5f6;">1rx.io</div>
<div class="t" style="font-size:31.57px;color:#a6abb1;transform:translate(237.80px,344.80px) scale(0.2500,0.2660) rotate(.02deg);-webkit-text-stroke:0.80px #a6abb1;">1 cookie</div>
<div class="t" style="font-size:31.68px;color:#f4f5f6;transform:translate(237.80px,371.75px) scale(0.2500,0.2714) rotate(.02deg);-webkit-text-stroke:1.20px #f4f5f6;">204b7da2f2eab3a33ca7b87d5b93b0ef.safeframe.googlesyndication.com</div>
<div class="t" style="font-size:31.20px;color:#a6abb1;transform:translate(237.80px,383.80px) scale(0.2500,0.2692) rotate(.02deg);-webkit-text-stroke:0.80px #a6abb1;">Local storage</div>
<div class="abs" id="fade"></div>
<div class="abs" id="bottom"></div>
</body></html>
